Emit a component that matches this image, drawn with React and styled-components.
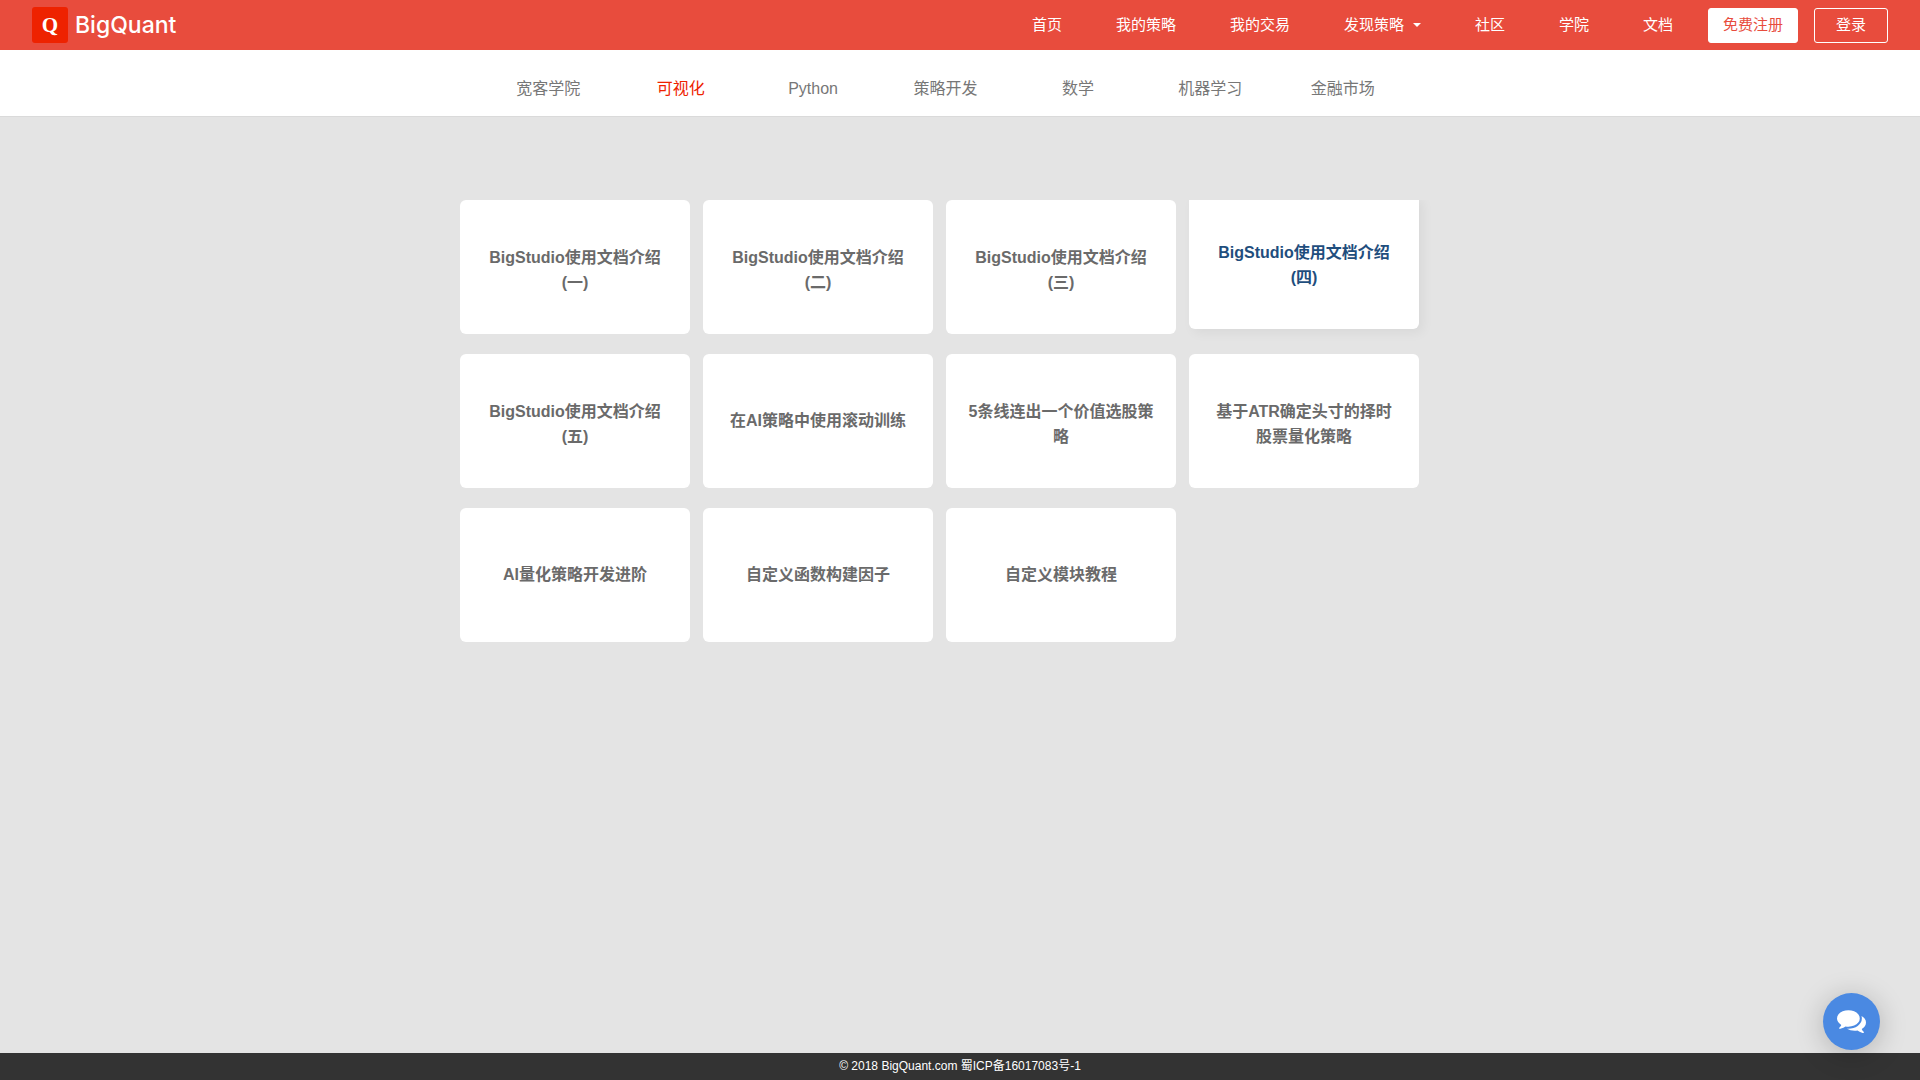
import React from "react";
import styled, { createGlobalStyle } from "styled-components";

const GlobalStyle = createGlobalStyle`
  *, *::before, *::after { box-sizing: border-box; }
  body {
    margin: 0;
    background: #e4e4e4;
    font-family: "Liberation Sans", "Noto Sans CJK SC", sans-serif;
    font-size: 16px;
    color: #6a6a6a;
  }
  a { color: inherit; text-decoration: none; }
`;

const Page = styled.div`
  display: flex;
  flex-direction: column;
  min-height: 100vh;
`;

const Header = styled.header`
  display: flex;
  align-items: center;
  justify-content: space-between;
  height: 50px;
  padding: 0 32px;
  background: #e84c3d;
  color: #fff;
`;

const Brand = styled.a`
  display: flex;
  align-items: center;
  gap: 7px;
  font-family: Inter, "Liberation Sans", sans-serif;
  font-size: 23px;
  font-weight: 500;
  line-height: 36px;
`;

const BrandMark = styled.span`
  display: flex;
  align-items: center;
  justify-content: center;
  width: 36px;
  height: 36px;
  border-radius: 3px;
  background: #ee2200;
  font-family: "Liberation Serif", serif;
  font-size: 21px;
  font-weight: 700;
  line-height: 34px;
`;

const MainNav = styled.nav`
  display: flex;
  align-items: center;
  font-size: 15px;
  line-height: 34px;
`;

const NavLink = styled.a`
  display: flex;
  align-items: center;
  gap: 9px;
  padding: 0 27px;
`;

const Caret = styled.span`
  border: 4px solid transparent;
  border-top-color: #fff;
  border-bottom: 0;
`;

const HeaderButton = styled.button`
  width: ${(p) => (p.$solid ? 90 : 74)}px;
  height: 35px;
  margin-left: ${(p) => (p.$solid ? 8 : 16)}px;
  padding: 0 0 1px;
  border: 1px solid #fff;
  border-radius: 3px;
  background: ${(p) => (p.$solid ? "#fff" : "transparent")};
  color: ${(p) => (p.$solid ? "#e84c3d" : "#fff")};
  font: inherit;
  line-height: 24px;
`;

const SubNav = styled.nav`
  background: #fff;
  border-bottom: 1px solid #dadada;
`;

const Tabs = styled.div`
  display: grid;
  grid-template-columns: repeat(7, 1fr);
  max-width: 1000px;
  margin: 0 auto;
  padding: 14px 51px 2px 22px;
`;

const Tab = styled.a`
  text-align: center;
  line-height: 50px;
  color: ${(p) => (p.$active ? "#ee2200" : "#777")};
`;

const Main = styled.main`
  flex: 1;
  padding: 83px 0 40px;
`;

const CardGrid = styled.div`
  display: grid;
  grid-template-columns: repeat(4, 1fr);
  gap: 20px 13px;
  max-width: 1000px;
  margin: 0 auto;
  padding-right: 41px;
  overflow: hidden;
`;

const Card = styled.a`
  display: flex;
  align-items: center;
  justify-content: center;
  height: 134px;
  padding: ${(p) => (p.$long ? "5px 20px 0" : "0 20px 2px")};
  border-radius: 6px;
  background: #fff;
  color: ${(p) => (p.$raised ? "#1f4e7d" : "#6a6a6a")};
  font-weight: 700;
  line-height: 25px;
  text-align: center;
  transform: ${(p) => (p.$raised ? "translateY(-5px)" : "none")};
  box-shadow: ${(p) => (p.$raised ? "4px 4px 12px rgba(0, 0, 0, 0.05)" : "none")};
`;

const Footer = styled.footer`
  height: 27px;
  background: #333;
  color: #fff;
  font-size: 12px;
  line-height: 26px;
  text-align: center;
`;

const ChatButton = styled.button`
  position: fixed;
  right: 40px;
  bottom: 30px;
  display: flex;
  align-items: center;
  justify-content: center;
  width: 57px;
  height: 57px;
  padding: 0 0 2px;
  border: 0;
  border-radius: 50%;
  background: #4a89e2;
  color: #fff;
  box-shadow: 0 4px 28px rgba(0, 0, 0, 0.22);
`;

const navItems = [
  { label: "首页" },
  { label: "我的策略" },
  { label: "我的交易" },
  { label: "发现策略", menu: true },
  { label: "社区" },
  { label: "学院" },
  { label: "文档" },
];

const tabs = ["宽客学院", "可视化", "Python", "策略开发", "数学", "机器学习", "金融市场"];

const courses = [
  { title: "BigStudio使用文档介绍(一)", long: true },
  { title: "BigStudio使用文档介绍(二)", long: true },
  { title: "BigStudio使用文档介绍(三)", long: true },
  { title: "BigStudio使用文档介绍(四)", long: true, raised: true },
  { title: "BigStudio使用文档介绍(五)", long: true },
  { title: "在AI策略中使用滚动训练" },
  { title: "5条线连出一个价值选股策略", long: true },
  { title: "基于ATR确定头寸的择时股票量化策略", long: true },
  { title: "AI量化策略开发进阶" },
  { title: "自定义函数构建因子" },
  { title: "自定义模块教程" },
];

function CommentsIcon() {
  return (
    <svg width="29" height="29" viewBox="0 0 1792 1792" fill="currentColor" aria-hidden="true">
      <path d="M1408 768q0 139-94 257t-256.5 186.5-353.5 68.5q-86 0-176-16-124 88-278 128-36 9-86 16h-3q-11 0-20.5-8t-11.5-21q-1-3-1-6.5t.5-6.5 2-6l2.5-5t3.5-5.5 4-5 4.5-5 4-4.5q5-6 23-25t26-29.5 22.5-29 25-38.5 20.5-44q-124-72-195-177t-71-224q0-139 94-257t256.5-186.5 353.5-68.5 353.5 68.5 256.5 186.5 94 257zm384 256q0 120-71 224.5t-195 176.5q10 24 20.5 44t25 38.5 22.5 29 26 29.5 23 25q1 1 4 4.5t4.5 5 4 5 3.5 5.5l2.5 5t2 6 .5 6.5-1 6.5q-3 14-13 22t-22 7q-50-7-86-16-154-40-278-128-90 16-176 16-271 0-472-132 58 4 88 4 161 0 309-45t264-129q125-92 192-212t67-254q0-77-23-152 129 71 204 178t75 230z" />
    </svg>
  );
}

export default function App() {
  return (
    <>
      <GlobalStyle />
      <Page>
        <Header>
          <Brand href="#">
            <BrandMark>Q</BrandMark>
            BigQuant
          </Brand>
          <MainNav>
            {navItems.map((item) => (
              <NavLink href="#" key={item.label}>
                {item.label}
                {item.menu && <Caret />}
              </NavLink>
            ))}
            <HeaderButton type="button" $solid>免费注册</HeaderButton>
            <HeaderButton type="button">登录</HeaderButton>
          </MainNav>
        </Header>
        <SubNav>
          <Tabs>
            {tabs.map((tab) => (
              <Tab href="#" key={tab} $active={tab === "可视化"}>{tab}</Tab>
            ))}
          </Tabs>
        </SubNav>
        <Main>
          <CardGrid>
            {courses.map((course) => (
              <Card href="#" key={course.title} $long={course.long} $raised={course.raised}>
                {course.title}
              </Card>
            ))}
          </CardGrid>
        </Main>
        <Footer>© 2018 BigQuant.com 蜀ICP备16017083号-1</Footer>
      </Page>
      <ChatButton type="button" aria-label="在线咨询">
        <CommentsIcon />
      </ChatButton>
    </>
  );
}
